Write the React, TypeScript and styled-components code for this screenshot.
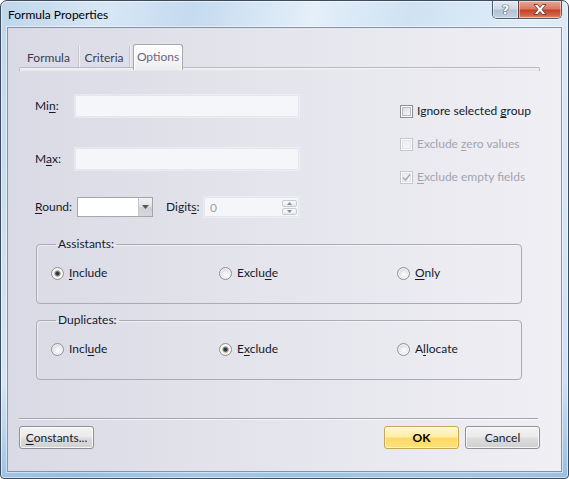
import React from "react";
import styled, { createGlobalStyle, css } from "styled-components";

const Global = createGlobalStyle`
  html, body { margin: 0; padding: 0; background: #ffffff; }
  body { width: 569px; height: 479px; overflow: hidden; font-family: Lato, "Liberation Sans", sans-serif; }
  * { box-sizing: border-box; }
`;

const Window = styled.div`
  width: 569px;
  height: 479px;
  display: flex;
  flex-direction: column;
  border: 1px solid #3d4c5d;
  border-radius: 7px 7px 4px 4px;
  box-shadow: inset 0 0 0 1px rgba(255, 255, 255, 0.55);
  background:
    linear-gradient(180deg, rgba(255, 255, 255, 0) 0%, rgba(255, 255, 255, 0) 80%, rgba(110, 165, 215, 0.55) 100%),
    linear-gradient(104deg, #bfd6ec 0%, #d8e7f5 16%, #c4daef 28%, #e4eff9 46%, #cfe2f3 60%, #e1edf8 78%, #c9ddf0 100%);
  overflow: hidden;
`;

const TitleBar = styled.div`
  height: 26px;
  flex: none;
  display: flex;
  justify-content: space-between;
  align-items: flex-start;
  padding: 0 6px 0 7px;
`;

const Title = styled.div`
  font-size: 12px;
  line-height: 14px;
  color: #000;
  margin-top: 7px;
`;

const CaptionGroup = styled.div`
  display: flex;
  height: 18px;
  border: 1px solid #4d5d6e;
  border-top: none;
  border-radius: 0 0 5px 5px;
  overflow: hidden;
  box-shadow: 0 1px 0 rgba(255, 255, 255, 0.6);
`;

const CaptionButton = styled.div<{ $close?: boolean }>`
  width: ${(p) => (p.$close ? 43 : 25)}px;
  height: 17px;
  display: flex;
  align-items: center;
  justify-content: center;
  box-shadow: inset 0 0 0 1px rgba(255, 255, 255, 0.45);
  ${(p) =>
    p.$close
      ? css`
          background: linear-gradient(180deg, #e8a996 0%, #d97a63 45%, #c5432a 55%, #d2654a 85%, #e2917a 100%);
          border-left: 1px solid #7a3a30;
        `
      : css`
          background: linear-gradient(180deg, #e3ebf3 0%, #cfdae6 45%, #b3c3d4 55%, #c3d1df 100%);
        `}
`;

const HelpGlyph = styled.span`
  font-family: "DejaVu Sans", sans-serif;
  font-size: 13px;
  font-weight: bold;
  line-height: 13px;
  color: #ffffff;
  text-shadow: 0 0 1px #3c4b5c, 0 0 1px #3c4b5c, 0 0 1px #3c4b5c;
`;

const Client = styled.div`
  flex: 1;
  margin: 0 6px 6px 6px;
  border: 1px solid #8493a5;
  box-shadow: 0 0 0 1px rgba(255, 255, 255, 0.5);
  background: linear-gradient(90deg, #d9dae5 0%, #e4e4ec 45%, #efeff4 100%);
  display: flex;
  flex-direction: column;
  padding: 14px 21px 0 11px;
`;

const TabRow = styled.div`
  height: 25px;
  display: flex;
  align-items: flex-end;
  position: relative;
  z-index: 2;
`;

const Tab = styled.div<{ $w: number; $active?: boolean; $sep?: boolean }>`
  width: ${(p) => p.$w}px;
  font-size: 12px;
  color: #3a3d52;
  display: flex;
  align-items: center;
  justify-content: center;
  ${(p) =>
    p.$active
      ? css`
          height: 26px;
          margin-left: 3px;
          margin-bottom: -3px;
          padding-bottom: 3px;
          color: #67687c;
          background: linear-gradient(180deg, #fdfdfe 0%, #f5f5f7 60%, #ededf0 100%);
          border: 1px solid #a5a6ae;
          border-bottom: none;
          border-radius: 3px 3px 0 0;
          box-shadow: inset 1px 1px 0 #ffffff, inset -1px 0 0 #ffffff;
        `
      : css`
          height: 21px;
          padding-top: 1px;
          border-right: ${p.$sep ? "1px solid #c3c4cc" : "none"};
          box-shadow: ${p.$sep ? "1px 0 0 rgba(255,255,255,0.6)" : "none"};
        `}
`;

const PanelBand = styled.div`
  height: 4px;
  border: 1px solid #b8b9c1;
  border-bottom: none;
  border-radius: 2px 2px 0 0;
  background: linear-gradient(180deg, #f3f3f5 0%, #e6e6ea 100%);
`;

const Body = styled.div`
  display: flex;
  flex-direction: column;
  padding-left: 16px;
`;

const Form = styled.div`
  display: flex;
`;

const LeftCol = styled.div`
  width: 264px;
  display: flex;
  flex-direction: column;
`;

const FieldRow = styled.div<{ $top: number }>`
  display: flex;
  align-items: center;
  margin-top: ${(p) => p.$top}px;
`;

const Label = styled.span<{ $w?: number; $disabled?: boolean }>`
  font-size: 12px;
  line-height: 14px;
  color: ${(p) => (p.$disabled ? "#a3a4b0" : "#141a2c")};
  ${(p) => (p.$w ? `width: ${p.$w}px; flex: none;` : "")}
  white-space: nowrap;
`;

const U = styled.span`
  text-decoration: underline;
  text-underline-offset: 2px;
`;

const TextBox = styled.div<{ $w: number; $h: number }>`
  width: ${(p) => p.$w}px;
  height: ${(p) => p.$h}px;
  background: #f4f6fa;
  border: 1px solid #e3e6ed;
  box-shadow: 0 0 0 1px rgba(255, 255, 255, 0.35);
  display: flex;
  align-items: center;
  padding-left: 5px;
  font-size: 12px;
  color: #9c9eaa;
`;

const Combo = styled.div`
  width: 76px;
  height: 20px;
  display: flex;
  border: 1px solid #a3a6ad;
  background: #ffffff;
  margin-right: 13px;
`;

const ComboField = styled.div`
  flex: 1;
`;

const ComboButton = styled.div`
  width: 14px;
  border-left: 1px solid #c6c7cc;
  background: linear-gradient(180deg, #f1f1f3 0%, #e2e2e6 50%, #cfcfd4 51%, #d8d8dc 100%);
  display: flex;
  align-items: center;
  justify-content: center;
`;

const Spin = styled.div`
  margin-left: auto;
  margin-right: 1px;
  width: 15px;
  height: 15px;
  display: flex;
  flex-direction: column;
  gap: 1px;
`;

const SpinHalf = styled.div`
  flex: 1;
  border: 1px solid #c9cbd2;
  border-radius: 2px;
  background: linear-gradient(180deg, #fbfbfc, #e9eaee);
  display: flex;
  align-items: center;
  justify-content: center;
`;

const RightCol = styled.div`
  margin-left: 101px;
  margin-top: 32px;
  display: flex;
  flex-direction: column;
  gap: 17px;
`;

const CheckRow = styled.div`
  display: flex;
  align-items: center;
  height: 16px;
  gap: 4px;
`;

const CheckBox = styled.span<{ $disabled?: boolean }>`
  width: 13px;
  height: 13px;
  flex: none;
  border: 1px solid ${(p) => (p.$disabled ? "#c5c6cc" : "#8c8d93")};
  background: ${(p) =>
    p.$disabled
      ? "linear-gradient(135deg, #ececef, #f8f8fa)"
      : "linear-gradient(135deg, #d3d4d8 0%, #eeeef0 60%, #fbfbfb 100%)"};
  box-shadow: inset 0 0 0 1px #fbfbfc, inset 0 0 0 2px ${(p) => (p.$disabled ? "#e2e3e7" : "#b9bac0")};
  display: flex;
  align-items: center;
  justify-content: center;
`;

const Group = styled.fieldset<{ $top: number }>`
  margin: ${(p) => p.$top}px 0 0 1px;
  width: 486px;
  border: 1px solid #a9aab4;
  border-radius: 4px;
  box-shadow: inset 1px 1px 0 rgba(255, 255, 255, 0.5);
  padding: 14px 0 22px 14px;
  display: grid;
  grid-template-columns: 168px 178px auto;
`;

const Legend = styled.legend`
  font-size: 12px;
  line-height: 14px;
  padding: 0 2px;
  margin-left: 5px;
  color: #141a2c;
`;

const RadioRow = styled.label`
  display: flex;
  align-items: center;
  height: 16px;
  gap: 5px;
`;

const Radio = styled.span<{ $on?: boolean }>`
  width: 13px;
  height: 13px;
  flex: none;
  border-radius: 50%;
  border: 1px solid #8e9097;
  background: ${(p) =>
    p.$on
      ? "radial-gradient(circle at 50% 50%, #1d2f4a 0, #2c4466 1.6px, #b89a72 2.6px, #f3e3cc 3.5px, #fbfbfc 4.2px, #e3e4e8 5.5px)"
      : "radial-gradient(circle at 55% 60%, #ffffff 0, #f2f2f4 2.5px, #dcdde2 5.5px)"};
  box-shadow: inset 0 0 0 1px rgba(255, 255, 255, 0.7);
`;

const Separator = styled.div`
  margin-top: 38px;
  margin-right: 2px;
  height: 2px;
  border-top: 1px solid #a3a4ac;
  border-bottom: 1px solid rgba(255, 255, 255, 0.7);
`;

const ButtonRow = styled.div`
  margin-top: 6px;
  display: flex;
  gap: 6px;
`;

const Button = styled.div<{ $default?: boolean; $push?: boolean }>`
  width: 75px;
  height: 23px;
  border-radius: 3px;
  display: flex;
  align-items: center;
  justify-content: center;
  font-size: 12px;
  color: #141a2c;
  ${(p) => (p.$push ? "margin-left: auto;" : "")}
  ${(p) =>
    p.$default
      ? css`
          border: 1px solid #c4a55a;
          font-weight: bold;
          color: #000;
          background: linear-gradient(180deg, #fff6d0 0%, #ffeea8 45%, #ffd964 55%, #ffe17e 100%);
          box-shadow: inset 0 0 0 1px rgba(255, 255, 255, 0.6);
        `
      : css`
          border: 1px solid #8f9096;
          background: linear-gradient(180deg, #f3f3f3 0%, #ebebeb 45%, #dcdcdc 55%, #d0d0d0 100%);
          box-shadow: inset 0 0 0 1px rgba(255, 255, 255, 0.75);
        `}
`;

const CheckOption = ({ children, disabled, checked }: { children: React.ReactNode; disabled?: boolean; checked?: boolean }) => (
  <CheckRow>
    <CheckBox $disabled={disabled}>
      {checked && (
        <svg width="9" height="9" viewBox="0 0 9 9">
          <path d="M1 4.5 L3.5 7 L8 1.5" fill="none" stroke="#a9abb5" strokeWidth="1.6" />
        </svg>
      )}
    </CheckBox>
    <Label $disabled={disabled}>{children}</Label>
  </CheckRow>
);

const RadioOption = ({ children, on }: { children: React.ReactNode; on?: boolean }) => (
  <RadioRow>
    <Radio $on={on} />
    <Label>{children}</Label>
  </RadioRow>
);

export default function App() {
  return (
    <>
      <Global />
      <Window>
        <TitleBar>
          <Title>Formula Properties</Title>
          <CaptionGroup>
            <CaptionButton>
              <HelpGlyph>?</HelpGlyph>
            </CaptionButton>
            <CaptionButton $close>
              <svg width="14" height="11" viewBox="0 0 14 11">
                <path
                  d="M1 0.5 H4.5 L7 3.5 L9.5 0.5 H13 L9 5.5 L13 10.5 H9.5 L7 7.5 L4.5 10.5 H1 L5 5.5 Z"
                  fill="#ffffff"
                  stroke="#5a2a22"
                  strokeWidth="0.8"
                  strokeLinejoin="round"
                />
              </svg>
            </CaptionButton>
          </CaptionGroup>
        </TitleBar>
        <Client>
          <TabRow>
            <Tab $w={60} $sep>Formula</Tab>
            <Tab $w={51} $sep>Criteria</Tab>
            <Tab $w={50} $active>Options</Tab>
          </TabRow>
          <PanelBand />
          <Body>
            <Form>
              <LeftCol>
                <FieldRow $top={24}>
                  <Label $w={40}>Mi<U>n</U>:</Label>
                  <TextBox $w={224} $h={22} />
                </FieldRow>
                <FieldRow $top={31}>
                  <Label $w={40}>M<U>a</U>x:</Label>
                  <TextBox $w={224} $h={22} />
                </FieldRow>
                <FieldRow $top={27}>
                  <Label $w={42}><U>R</U>ound:</Label>
                  <Combo>
                    <ComboField />
                    <ComboButton>
                      <svg width="7" height="4" viewBox="0 0 7 4">
                        <path d="M0 0 H7 L3.5 4 Z" fill="#55565c" />
                      </svg>
                    </ComboButton>
                  </Combo>
                  <Label $w={38}>Digit<U>s</U>:</Label>
                  <TextBox $w={95} $h={20}>
                    0
                    <Spin>
                      <SpinHalf>
                        <svg width="5" height="3" viewBox="0 0 5 3">
                          <path d="M0 3 H5 L2.5 0 Z" fill="#8a8c96" />
                        </svg>
                      </SpinHalf>
                      <SpinHalf>
                        <svg width="5" height="3" viewBox="0 0 5 3">
                          <path d="M0 0 H5 L2.5 3 Z" fill="#8a8c96" />
                        </svg>
                      </SpinHalf>
                    </Spin>
                  </TextBox>
                </FieldRow>
              </LeftCol>
              <RightCol>
                <CheckOption>Ignore selected <U>g</U>roup</CheckOption>
                <CheckOption disabled>Exclude <U>z</U>ero values</CheckOption>
                <CheckOption disabled checked><U>E</U>xclude empty fields</CheckOption>
              </RightCol>
            </Form>
            <Group $top={20}>
              <Legend>Assistants:</Legend>
              <RadioOption on><U>I</U>nclude</RadioOption>
              <RadioOption>Exclu<U>d</U>e</RadioOption>
              <RadioOption><U>O</U>nly</RadioOption>
            </Group>
            <Group $top={9}>
              <Legend>Duplicates:</Legend>
              <RadioOption>Incl<U>u</U>de</RadioOption>
              <RadioOption on>E<U>x</U>clude</RadioOption>
              <RadioOption>A<U>l</U>locate</RadioOption>
            </Group>
          </Body>
          <Separator />
          <ButtonRow>
            <Button><span><U>C</U>onstants...</span></Button>
            <Button $default $push>OK</Button>
            <Button>Cancel</Button>
          </ButtonRow>
        </Client>
      </Window>
    </>
  );
}
